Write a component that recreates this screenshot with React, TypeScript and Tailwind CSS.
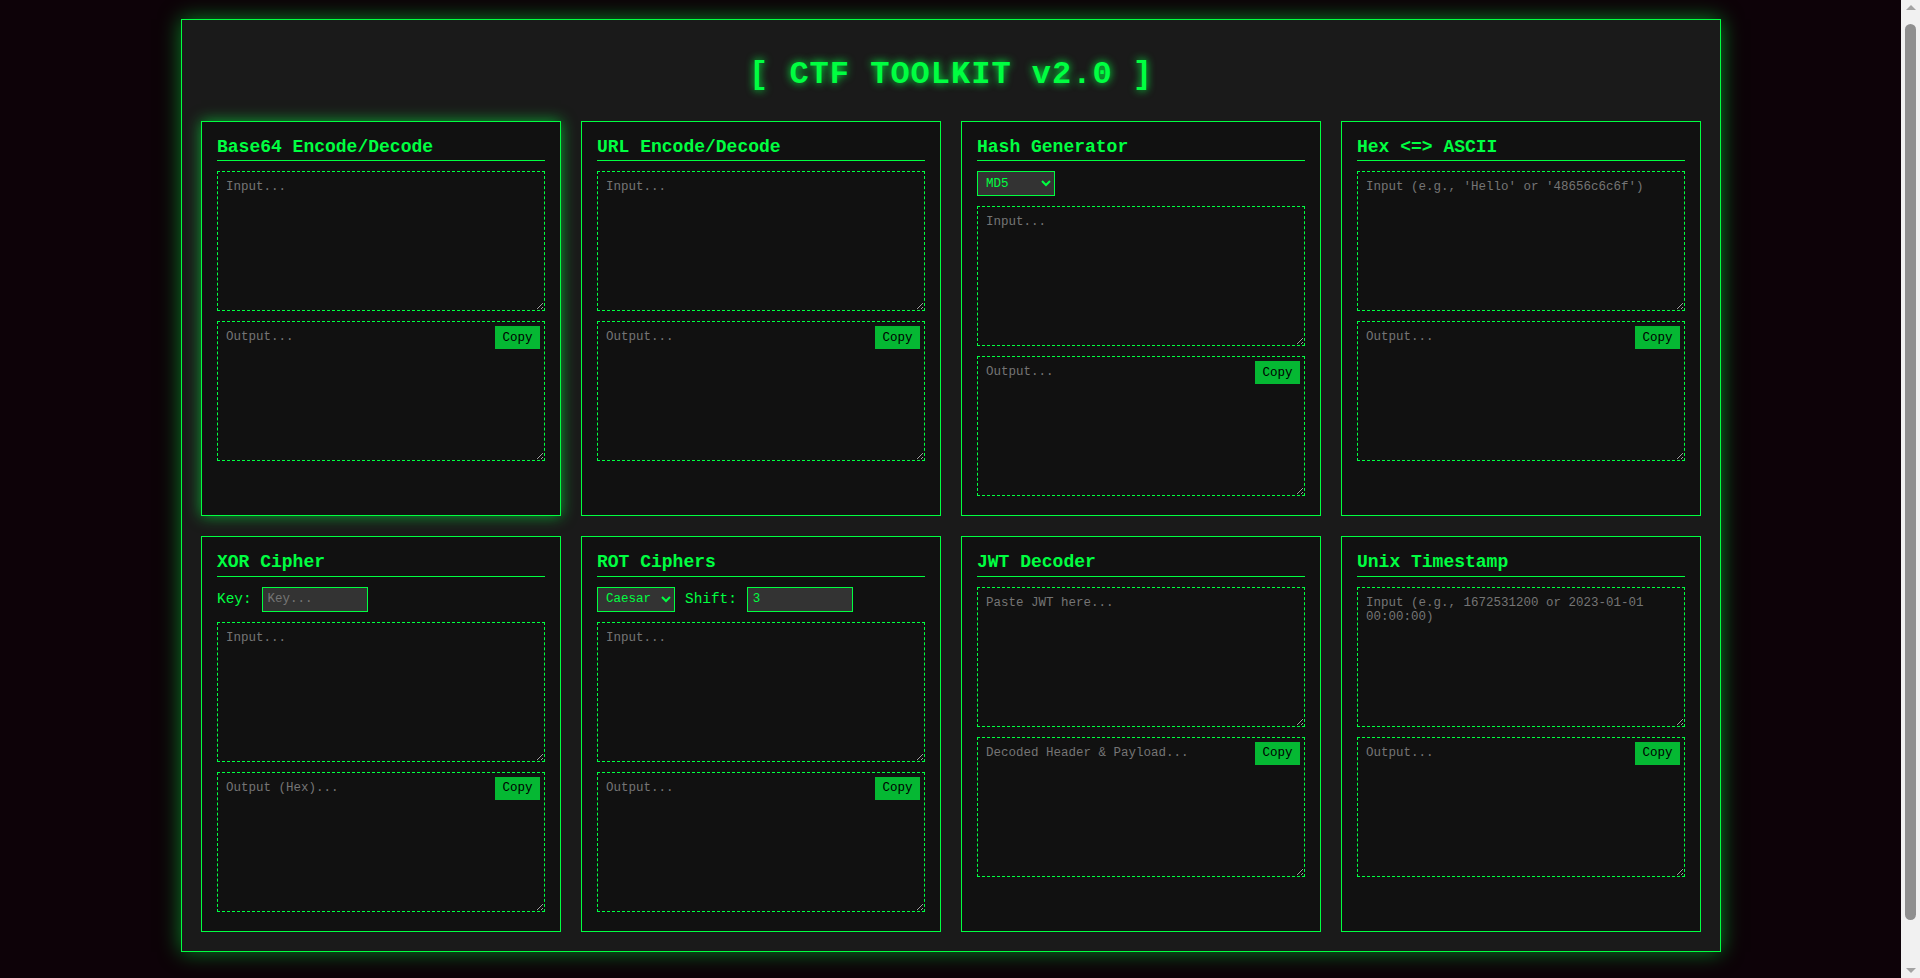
import { ReactNode } from "react";

const MONO = "font-['Liberation_Mono','Courier_New',monospace]";

type CardProps = {
  title: string;
  glow?: boolean;
  children: ReactNode;
};

// one tool panel
function Card({ title, glow, children }: CardProps) {
  return (
    <div
      className={`flex flex-col border border-[#00ff41] bg-[#111111] p-[15px] pb-[19px] ${
        glow ? "shadow-[0_0_14px_rgba(0,255,65,0.6)]" : ""
      }`}
    >
      <h3 className="mb-[10px] border-b border-[#00ff41] pb-[3px] text-[18px] font-bold leading-[20.4px] text-[#00ff41]">
        {title}
      </h3>
      <div className="flex flex-col gap-[10px]">{children}</div>
    </div>
  );
}

function Area({ placeholder, copy }: { placeholder: string; copy?: boolean }) {
  return (
    <div className="relative">
      <textarea
        placeholder={placeholder}
        className={`${MONO} block h-[140px] w-full border border-dashed border-[#00ff41] bg-[#111111] p-[8px] text-[12.5px] leading-[14px] text-[#00ff41] outline-none placeholder:text-[#757575]`}
      />
      {copy && (
        <button className="absolute right-[5px] top-[5px] flex h-[23px] w-[45px] items-center justify-center bg-[#05b833] text-[12.5px] leading-[14px] text-black">
          Copy
        </button>
      )}
    </div>
  );
}

function Select({ options }: { options: string[] }) {
  return (
    <select className="h-[25px] w-[78px] border border-[#00ff41] bg-[#333333] px-[4px] text-[12.5px] text-[#00ff41] outline-none">
      {options.map((o) => (
        <option key={o}>{o}</option>
      ))}
    </select>
  );
}

function TextInput({ placeholder, value }: { placeholder?: string; value?: string }) {
  return (
    <input
      type="text"
      placeholder={placeholder}
      defaultValue={value}
      className="h-[25px] w-[106px] border border-[#00ff41] bg-[#333333] px-[5px] text-[12.5px] text-[#00ff41] outline-none placeholder:text-[#757575]"
    />
  );
}

// the window's vertical scrollbar, as seen in the capture
function ScrollBar() {
  return (
    <div className="fixed right-0 top-0 flex h-screen w-[19px] flex-col items-center bg-[#f1f1f1]">
      <div className="mt-[5px] h-0 w-0 border-x-[5px] border-b-[5px] border-x-transparent border-b-[#a3a3a3]" />
      <div className="mt-[14px] h-[896px] w-[11px] rounded-full bg-[#8f8f8f]" />
      <div className="mt-auto mb-[5px] h-0 w-0 border-x-[5px] border-t-[5px] border-x-transparent border-t-[#a3a3a3]" />
    </div>
  );
}

export default function App() {
  return (
    <div className={`${MONO} min-h-[1030px] bg-[#0d0208] pt-[19px] pb-[80px]`}>
      <div className="ml-[181px] w-[1540px] border border-[#00ff41] bg-[#1a1a1a] p-[19px] shadow-[0_0_20px_rgba(0,255,65,0.5)]">
        <h1 className="mb-[28px] mt-[18px] h-9 text-center text-[32px] font-bold leading-9 tracking-[1px] text-[#00ff41] [text-shadow:0_0_8px_#00ff41]">
          [ CTF TOOLKIT v2.0 ]
        </h1>

        <div className="grid grid-cols-4 gap-5">
          <Card title="Base64 Encode/Decode" glow>
            <Area placeholder="Input..." />
            <Area placeholder="Output..." copy />
          </Card>

          <Card title="URL Encode/Decode">
            <Area placeholder="Input..." />
            <Area placeholder="Output..." copy />
          </Card>

          <Card title="Hash Generator">
            <div className="flex">
              <Select options={["MD5", "SHA-1", "SHA-256"]} />
            </div>
            <Area placeholder="Input..." />
            <Area placeholder="Output..." copy />
          </Card>

          <Card title="Hex <=> ASCII">
            <Area placeholder="Input (e.g., 'Hello' or '48656c6c6f')" />
            <Area placeholder="Output..." copy />
          </Card>

          <Card title="XOR Cipher">
            <div className="flex items-center gap-[10px]">
              <label className="text-[14.4px] text-[#00ff41]">Key:</label>
              <TextInput placeholder="Key..." />
            </div>
            <Area placeholder="Input..." />
            <Area placeholder="Output (Hex)..." copy />
          </Card>

          <Card title="ROT Ciphers">
            <div className="flex items-center gap-[10px]">
              <Select options={["Caesar", "ROT13", "ROT47"]} />
              <label className="text-[14.4px] text-[#00ff41]">Shift:</label>
              <TextInput value="3" />
            </div>
            <Area placeholder="Input..." />
            <Area placeholder="Output..." copy />
          </Card>

          <Card title="JWT Decoder">
            <Area placeholder="Paste JWT here..." />
            <Area placeholder="Decoded Header & Payload..." copy />
          </Card>

          <Card title="Unix Timestamp">
            <Area placeholder="Input (e.g., 1672531200 or 2023-01-01 00:00:00)" />
            <Area placeholder="Output..." copy />
          </Card>
        </div>
      </div>
      <ScrollBar />
    </div>
  );
}
